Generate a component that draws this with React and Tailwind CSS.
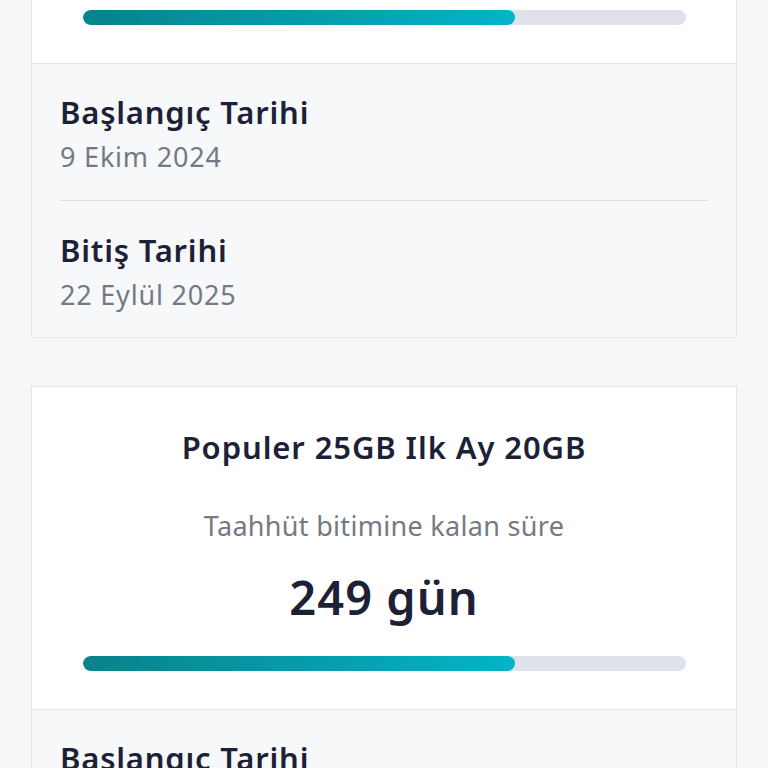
export default function App() {
  const Card = ({ first }) => (
    <div className={`mx-[31px] border border-[#e2e5ea] bg-white ${first ? "-mt-[260px]" : "mt-[48px]"}`}>
      <div className="flex flex-col items-center pt-[42px] pb-[38px] border-b border-[#e2e5ea]">
        <div className="text-[31px] leading-[36px] font-semibold tracking-[0.9px] text-[#1d2136]">Populer 25GB Ilk Ay 20GB</div>
        <div className="mt-[45px] text-[27px] leading-[32px] tracking-[0.3px] text-[#747a84]">Taahhüt bitimine kalan süre</div>
        <div className="mt-[27px] text-[47px] leading-[56px] font-semibold tracking-[1px] text-[#1d2136]">249 gün</div>
        <div className="mt-[31px] w-[603px] h-[15px] rounded-full bg-[#dfe2ea] overflow-hidden">
          <div className="h-full w-[432px] rounded-full bg-gradient-to-r from-[#07838c] to-[#03b4c8]" />
        </div>
      </div>
      <div className="bg-[#f7f8fa] px-[28px] pt-[30px] pb-[26px]">
        <div className="text-[31px] leading-[36px] font-semibold tracking-[0.8px] text-[#1d2136]">Başlangıç Tarihi</div>
        <div className="mt-[11px] text-[27px] leading-[32px] tracking-[0.8px] text-[#747a84]">9 Ekim 2024</div>
        <div className="mt-[27px] h-px bg-[#dcdfe4]" />
        <div className="mt-[31px] text-[31px] leading-[36px] font-semibold tracking-[0.8px] text-[#1d2136]">Bitiş Tarihi</div>
        <div className="mt-[11px] text-[27px] leading-[32px] tracking-[0.8px] text-[#747a84]">22 Eylül 2025</div>
      </div>
    </div>
  );
  return (
    <div className="w-[768px] h-[768px] overflow-hidden bg-[#f6f7f9]" style={{ fontFamily: "'Noto Sans', sans-serif" }}>
      <Card first />
      <Card />
    </div>
  );
}
